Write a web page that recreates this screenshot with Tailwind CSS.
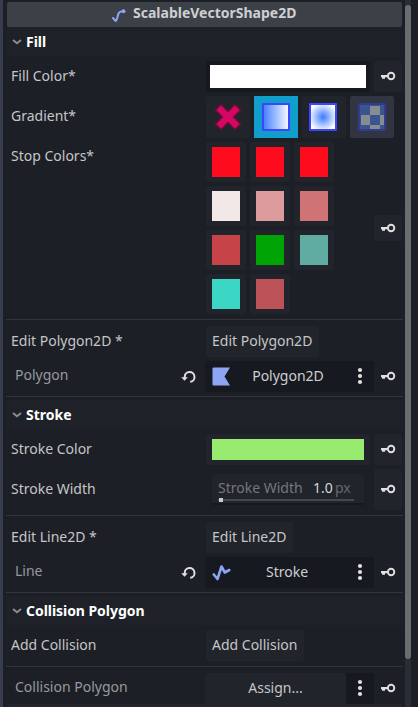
<!DOCTYPE html>
<html lang="en">
<head>
<meta charset="utf-8">
<title>Inspector</title>
<script src="https://cdn.jsdelivr.net/npm/@tailwindcss/browser@4"></script>
</head>
<body class="bg-[#1c1f26] overflow-hidden">
<svg class="hidden">
  <symbol id="key" viewBox="0 0 16 16"><path d="M1 7h6.500v2.200H5v1.600H2V9.200H1z" fill="#e0e0e0"/><circle cx="11.100" cy="8" r="3.200" fill="none" stroke="#e0e0e0" stroke-width="1.900"/></symbol>
  <symbol id="chev" viewBox="0 0 10 6"><path d="M1 1l4 3.3L9 1" fill="none" stroke="#8b8d90" stroke-width="1.8"/></symbol>
  <symbol id="dots" viewBox="0 0 6 18"><circle cx="3" cy="3" r="2.1" fill="#e0e0e0"/><circle cx="3" cy="9" r="2.1" fill="#e0e0e0"/><circle cx="3" cy="15" r="2.1" fill="#e0e0e0"/></symbol>
  <symbol id="reload" viewBox="0 0 16 16"><path d="M4.700 9V7.900A4.900 4.900 0 1 1 10.200 12.800" fill="none" stroke="#e0e0e0" stroke-width="2"/><path d="M1.200 8.300h6.600L4.500 11.800z" fill="#e0e0e0"/></symbol>
</svg>
<div class="flex h-[707px] w-[418px] font-['Noto_Sans',sans-serif] text-sm text-[#c5c6c8] leading-5 whitespace-nowrap">
  <div class="w-[3px] bg-[#363d4c] shrink-0"></div>
  <main class="w-[400px] pl-[3px] pt-[2px] shrink-0 flex flex-col overflow-hidden">
    <header class="ml-px mr-px h-[25px] shrink-0 rounded-[2px] bg-[#3c4047] flex items-center font-bold text-[#cdcfd2] pl-[105px]">
      <svg class="w-[14px] h-[14px] mr-[7px] mt-[2px]" viewBox="0 0 14 14"><path d="M1 9l2.700 3C7 9 4 2.200 11 2.200" fill="none" stroke="#8da5f3" stroke-width="2" stroke-linecap="round" stroke-linejoin="round"/><circle cx="11.500" cy="2.300" r="2" fill="#8da5f3"/></svg>
      <span class="pb-1">ScalableVectorShape2D</span>
    </header>
    <h2 class="mx-px h-[30px] shrink-0 bg-[#1e2228] flex items-center font-bold text-white pl-[5px]"><svg class="w-[10px] h-[6px] mr-1"><use href="#chev"/></svg>Fill</h2>

    <div class="mt-1 h-[31px] shrink-0 flex items-center pl-[5px]">
      <span class="w-[195px] pb-[2px]">Fill Color*</span>
      <div class="w-[164px] h-[31px] rounded-[2px] bg-[#16191f] p-1"><div class="h-[23px] bg-white"></div></div>
      <div class="ml-1 w-7 h-[31px] rounded-[2px] bg-[#21252b] flex items-center justify-center pb-px"><svg class="w-4 h-4"><use href="#key"/></svg></div>
    </div>

    <div class="mt-1 h-[42px] shrink-0 flex items-center pl-[5px]">
      <span class="w-[195px] pb-[2px]">Gradient*</span>
      <div class="flex gap-1">
        <div class="w-11 h-[42px] rounded-[2px] bg-[#21252b] flex items-center justify-center"><svg class="w-7 h-7" viewBox="0 0 28 28"><path d="M7 1.500L14 8.500l7-7 5.500 5.500-7 7 7 7-5.500 5.500-7-7-7 7L1.500 21l7-7-7-7z" fill="#d40862" stroke="#700b38" stroke-width="1.500" stroke-linejoin="round"/></svg></div>
        <div class="w-11 h-[42px] bg-[#119ecb] flex items-center justify-center"><div class="w-7 h-7 rounded-[1px] border-2 border-[#3c45ff] bg-linear-to-r from-[#4a80ff] to-[#f5f7ff]"></div></div>
        <div class="w-11 h-[42px] rounded-[2px] bg-[#21252b] flex items-center pl-[7px]"><div class="w-7 h-7 rounded-[1px] border-2 border-[#3c45ff] bg-[radial-gradient(circle_closest-side,#3f7bff,#ffffff_120%)]"></div></div>
        <div class="w-11 h-[42px] rounded-[2px] bg-[#303541] flex items-center justify-center"><svg class="w-7 h-7" viewBox="0 0 28 28"><rect x="1" y="1" width="26" height="26" rx="1" fill="#39548f" stroke="#343a8e" stroke-width="2"/><path d="M12 3h10v9H12zM3 12h9v10H3zM22 12h4v10h-4zM12 22h10v4H12z" fill="#878b92"/></svg></div>
      </div>
    </div>

    <div class="mt-1 h-[172px] shrink-0 flex pl-[5px]">
      <span class="w-[195px] pt-1">Stop Colors*</span>
      <div class="w-[168px] grid grid-cols-[40px_40px_40px] auto-rows-[40px] gap-1 content-start">
        <div class="rounded-[2px] bg-[#21252b] px-[6px] py-[5px]"><div class="h-[30px] bg-[#ff0b1e]"></div></div>
        <div class="rounded-[2px] bg-[#21252b] px-[6px] py-[5px]"><div class="h-[30px] bg-[#ff0b1e]"></div></div>
        <div class="rounded-[2px] bg-[#21252b] px-[6px] py-[5px]"><div class="h-[30px] bg-[#ff0b1e]"></div></div>
        <div class="rounded-[2px] bg-[#21252b] px-[6px] py-[5px]"><div class="h-[30px] bg-[#f3e8e8]"></div></div>
        <div class="rounded-[2px] bg-[#21252b] px-[6px] py-[5px]"><div class="h-[30px] bg-[#dd9b9d]"></div></div>
        <div class="rounded-[2px] bg-[#21252b] px-[6px] py-[5px]"><div class="h-[30px] bg-[#cf7377]"></div></div>
        <div class="rounded-[2px] bg-[#21252b] px-[6px] py-[5px]"><div class="h-[30px] bg-[#c64448]"></div></div>
        <div class="rounded-[2px] bg-[#21252b] px-[6px] py-[5px]"><div class="h-[30px] bg-[#00a304]"></div></div>
        <div class="rounded-[2px] bg-[#21252b] px-[6px] py-[5px]"><div class="h-[30px] bg-[#61aca2]"></div></div>
        <div class="rounded-[2px] bg-[#21252b] px-[6px] py-[5px]"><div class="h-[30px] bg-[#3cd6c4]"></div></div>
        <div class="rounded-[2px] bg-[#21252b] px-[6px] py-[5px]"><div class="h-[30px] bg-[#bc5158]"></div></div>
      </div>
      <div class="self-center w-7 h-[26px] rounded-[2px] bg-[#21252b] flex items-center justify-center"><svg class="w-4 h-4"><use href="#key"/></svg></div>
    </div>

    <div class="mt-[5px] h-px shrink-0 bg-[#32353b]"></div>
    <div class="mt-[6px] h-[31px] shrink-0 flex items-center pl-[5px]">
      <span class="w-[195px] pb-[2px]">Edit Polygon2D *</span>
      <div class="w-[113px] h-[31px] rounded-[2px] bg-[#21252b] flex items-center pl-[6px] pb-[2px]">Edit Polygon2D</div>
    </div>
    <div class="mt-1 h-[31px] shrink-0 flex items-center pl-[9px]">
      <span class="w-[165px] pb-1 text-[#97999c]">Polygon</span>
      <svg class="w-4 h-4 mr-[9px]"><use href="#reload"/></svg>
      <div class="w-[169px] h-[31px] rounded-[2px] bg-[#16191f] flex items-center pl-[7px]">
        <svg class="w-[19px] h-[19px]" viewBox="0 0 19 19"><path d="M1.500.5H18L12.500 9.500 18 18.500H1.500Q.5 18.500.5 17.500V1.500Q.5.500 1.500.500z" fill="#8da5f3"/></svg>
        <span class="w-[114px] pb-[2px] text-center text-[#cdcfd2]">Polygon2D</span>
        <svg class="w-[6px] h-[18px] ml-3 mb-px"><use href="#dots"/></svg>
      </div>
      <svg class="w-4 h-4 ml-[6px] mb-px"><use href="#key"/></svg>
    </div>

    <div class="mt-1 h-px shrink-0 bg-[#32353b]"></div>
    <h2 class="mt-[3px] mx-px h-[30px] shrink-0 bg-[#1e2228] flex items-center font-bold text-white pl-[5px]"><svg class="w-[10px] h-[6px] mr-1"><use href="#chev"/></svg>Stroke</h2>
    <div class="mt-1 h-[31px] shrink-0 flex items-center pl-[5px]">
      <span class="w-[195px] pb-[2px]">Stroke Color</span>
      <div class="w-[164px] h-[31px] rounded-[2px] bg-[#21252b] px-[6px] py-[5px]"><div class="h-[21px] bg-[#99eb6f]"></div></div>
      <div class="ml-1 w-7 h-[31px] rounded-[2px] bg-[#21252b] flex items-center justify-center pb-px"><svg class="w-4 h-4"><use href="#key"/></svg></div>
    </div>
    <div class="mt-1 h-[41px] shrink-0 flex items-center pl-[5px]">
      <span class="w-[201px] pb-[2px]">Stroke Width</span>
      <div class="w-[152px] h-[31px] rounded-[2px] bg-[#21252b] border-b-2 border-[#16191f] pl-[6px] pt-1">
        <div class="flex"><span class="w-[95px] text-[#74777b]">Stroke Width</span><span class="w-[22px] text-[#d5d6d8]">1.0</span><span class="text-[#64676c]">px</span></div>
        <div class="mt-px w-[136px] h-[2px] bg-[#44484e] flex items-center pl-px"><div class="size-1 bg-[#c8c9cb]"></div></div>
      </div>
      <div class="ml-[10px] w-7 h-[41px] rounded-[2px] bg-[#21252b] flex items-center justify-center pb-px"><svg class="w-4 h-4"><use href="#key"/></svg></div>
    </div>

    <div class="mt-[5px] h-px shrink-0 bg-[#32353b]"></div>
    <div class="mt-[6px] h-[31px] shrink-0 flex items-center pl-[5px]">
      <span class="w-[195px] pb-[2px]">Edit Line2D *</span>
      <div class="w-[87px] h-[31px] rounded-[2px] bg-[#21252b] flex items-center pl-[6px] pb-[2px]">Edit Line2D</div>
    </div>
    <div class="mt-1 h-[31px] shrink-0 flex items-center pl-[9px]">
      <span class="w-[165px] pb-1 text-[#97999c]">Line</span>
      <svg class="w-4 h-4 mr-[9px]"><use href="#reload"/></svg>
      <div class="w-[169px] h-[31px] rounded-[2px] bg-[#16191f] flex items-center pl-[7px]">
        <svg class="w-[19px] h-[19px]" viewBox="0 0 19 19"><path d="M1.800 11.500L5.500 16 9.500 3.500l3.300 6L17.300 7" fill="none" stroke="#8da5f3" stroke-width="2.600" stroke-linecap="round" stroke-linejoin="round"/></svg>
        <span class="w-[112px] pb-[2px] text-center text-[#cdcfd2]">Stroke</span>
        <svg class="w-[6px] h-[18px] ml-[14px] mb-px"><use href="#dots"/></svg>
      </div>
      <svg class="w-4 h-4 ml-[6px] mb-px"><use href="#key"/></svg>
    </div>

    <div class="mt-1 h-px shrink-0 bg-[#32353b]"></div>
    <h2 class="mt-[3px] mx-px h-[30px] shrink-0 bg-[#1e2228] flex items-center font-bold text-white pl-[5px]"><svg class="w-[10px] h-[6px] mr-1"><use href="#chev"/></svg><span class="tracking-[-0.05px]">Collision Polygon</span></h2>
    <div class="mt-1 h-[31px] shrink-0 flex items-center pl-[5px]">
      <span class="w-[195px] pb-[2px]">Add Collision</span>
      <div class="w-[98px] h-[31px] rounded-[2px] bg-[#21252b] flex items-center pl-[6px] pb-[2px]">Add Collision</div>
    </div>
    <div class="mt-[5px] h-px shrink-0 bg-[#32353b]"></div>
    <div class="mt-[6px] h-[31px] shrink-0 flex items-center pl-[9px]">
      <span class="w-[190px] pb-1 text-[#97999c]">Collision Polygon</span>
      <div class="w-[141px] h-[31px] rounded-[2px] bg-[#21252b] flex items-center justify-center pb-[2px]">Assign...</div>
      <div class="w-7 h-[31px] rounded-r-[2px] bg-[#16191f] flex items-center justify-center pb-px"><svg class="w-[6px] h-[18px]"><use href="#dots"/></svg></div>
      <svg class="w-4 h-4 ml-[6px] mb-px"><use href="#key"/></svg>
    </div>
    <div class="mx-px h-1 shrink-0 bg-[#22262c]"></div>
  </main>
  <div class="ml-[2px] w-[6px] shrink-0 bg-[#2a2d34] pt-[5px]"><div class="h-[654px] rounded-[3px] bg-[#6a6c70]"></div></div>
  <div class="grow bg-[#1a1e26]"></div>
</div>
</body>
</html>
